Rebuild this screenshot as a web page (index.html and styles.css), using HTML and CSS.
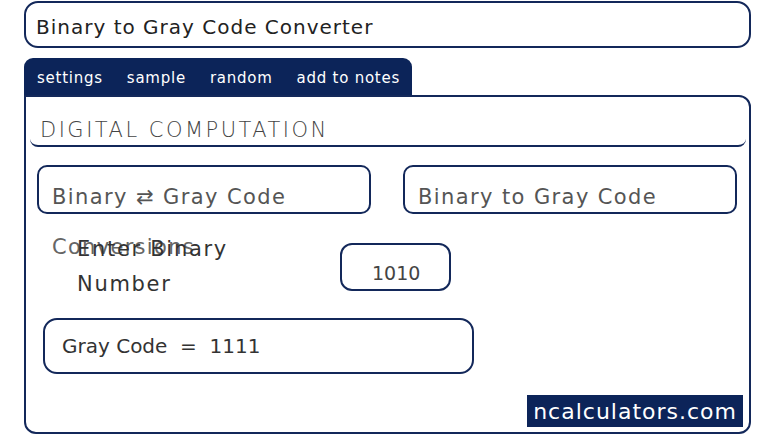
FILE: index.html
```html
<!DOCTYPE html>
<html>
<head>
<meta charset="utf-8">
<link rel="stylesheet" href="styles.css">
</head>
<body>
<div class="page">
  <div class="title">Binary to Gray Code Converter</div>
  <div class="tabs">
    <span class="tab">settings</span>
    <span class="tab">sample</span>
    <span class="tab">random</span>
    <span class="tab">add to notes</span>
  </div>
  <div class="panel">
    <div class="heading">DIGITAL COMPUTATION</div>
    <div class="selects">
      <div class="select">Binary &#8644; Gray Code</div>
      <div class="select">Binary to Gray Code</div>
    </div>
    <div class="form">
      <div class="conv">Conversions</div>
      <div class="row">
        <div class="label">Enter Binary Number</div>
        <div class="input">1010</div>
      </div>
    </div>
    <div class="result">Gray Code&nbsp; = &nbsp;1111</div>
    <div class="brandrow"><span class="brand">ncalculators.com</span></div>
  </div>
</div>
</body>
</html>
```
FILE: styles.css
```css
* { box-sizing: border-box; }
html, body { margin: 0; padding: 0; background: #fff; }
body {
  font-family: "DejaVu Sans", "Inter", sans-serif;
  color: #333;
}
.page {
  width: 770px;
  height: 435px;
  padding: 1px 19px 0 24px;
  display: flex;
  flex-direction: column;
}
.title {
  height: 47px;
  border: 2px solid #13285a;
  border-radius: 14px;
  padding: 4px 0 0 10px;
  display: flex;
  align-items: center;
  font-size: 20px;
  letter-spacing: 1px;
  color: #222;
}
.tabs {
  margin-top: 10px;
  align-self: flex-start;
  height: 37px;
  background: #0c2459;
  border-radius: 9px 9px 0 0;
  display: flex;
  align-items: center;
  padding: 2px 0 0 0;
}
.tab {
  color: #fff;
  font-size: 15px;
  letter-spacing: 0.75px;
  padding: 0 12px;
}
.tab:first-child { padding-left: 13px; }
.panel {
  flex: 1;
  border: 2px solid #13285a;
  border-radius: 0 12px 12px 12px;
  margin-bottom: 1px;
  display: flex;
  flex-direction: column;
}
.heading {
  margin: 12px 3px 0 4px;
  height: 38px;
  padding: 6px 0 0 10px;
  border-bottom: 2px solid #13285a;
  border-radius: 0 0 8px 8px;
  font-size: 21px;
  letter-spacing: 2.5px;
  font-weight: 300;
  color: #444;
  display: flex;
  align-items: center;
}
.selects {
  margin: 18px 12px 0 11px;
  display: flex;
  gap: 32px;
}
.select {
  flex: 1;
  height: 49px;
  border: 2px solid #13285a;
  border-radius: 10px;
  padding: 14px 0 0 13px;
  display: flex;
  align-items: center;
  font-size: 21px;
  letter-spacing: 1.4px;
  color: #555;
}
.form {
  margin: 18px 0 0 26px;
  display: grid;
}
.conv, .row { grid-area: 1 / 1; }
.conv {
  font-size: 21px;
  letter-spacing: 1.3px;
  color: #666;
  line-height: 30px;
}
.row {
  display: flex;
  align-items: flex-start;
  padding-left: 25px;
}
.label {
  width: 180px;
  font-size: 21px;
  letter-spacing: 1.7px;
  line-height: 35px;
  color: #333;
}
.input {
  margin: 11px 0 0 83px;
  width: 111px;
  height: 48px;
  border: 2px solid #13285a;
  border-radius: 12px;
  padding: 12px 0 0 30px;
  font-size: 19px;
  color: #444;
  display: flex;
  align-items: center;
}
.result {
  margin: 16px 0 0 17px;
  width: 431px;
  height: 56px;
  border: 2px solid #13285a;
  border-radius: 14px;
  padding-left: 17px;
  display: flex;
  align-items: center;
  font-size: 20px;
  color: #333;
}
.brandrow {
  margin-top: auto;
  margin-bottom: 5px;
  display: flex;
  justify-content: flex-end;
  padding-right: 6px;
}
.brand {
  background: #0c2459;
  color: #fff;
  font-size: 22px;
  letter-spacing: 1px;
  height: 32px;
  padding: 0 6px;
  display: flex;
  align-items: center;
}
```
